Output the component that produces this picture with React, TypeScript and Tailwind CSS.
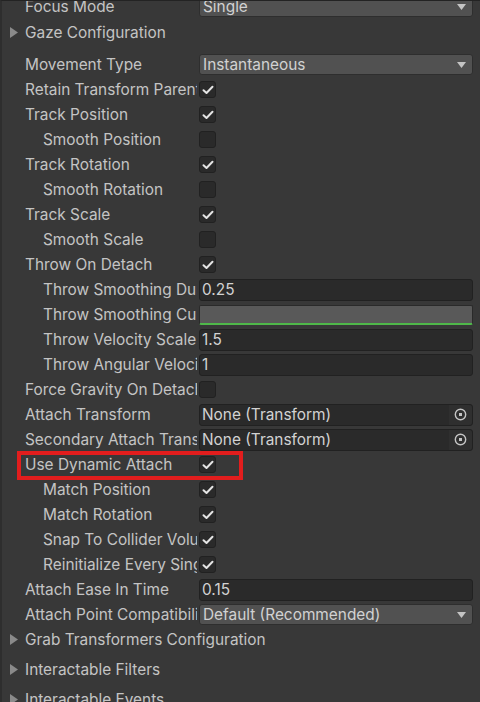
import React from "react";

type Field =
    | { kind: "dropdown"; value: string }
    | { kind: "check"; checked: boolean }
    | { kind: "text"; value: string }
    | { kind: "curve" }
    | { kind: "object"; value: string };

interface Row {
    label: string;
    indent?: boolean;
    field: Field;
    highlight?: boolean;
}

const rows: Row[] = [
    { label: "Movement Type", field: { kind: "dropdown", value: "Instantaneous" } },
    { label: "Retain Transform Parent", field: { kind: "check", checked: true } },
    { label: "Track Position", field: { kind: "check", checked: true } },
    { label: "Smooth Position", indent: true, field: { kind: "check", checked: false } },
    { label: "Track Rotation", field: { kind: "check", checked: true } },
    { label: "Smooth Rotation", indent: true, field: { kind: "check", checked: false } },
    { label: "Track Scale", field: { kind: "check", checked: true } },
    { label: "Smooth Scale", indent: true, field: { kind: "check", checked: false } },
    { label: "Throw On Detach", field: { kind: "check", checked: true } },
    { label: "Throw Smoothing Duration", indent: true, field: { kind: "text", value: "0.25" } },
    { label: "Throw Smoothing Curve", indent: true, field: { kind: "curve" } },
    { label: "Throw Velocity Scale", indent: true, field: { kind: "text", value: "1.5" } },
    { label: "Throw Angular Velocity Scale", indent: true, field: { kind: "text", value: "1" } },
    { label: "Force Gravity On Detach", field: { kind: "check", checked: false } },
    { label: "Attach Transform", field: { kind: "object", value: "None (Transform)" } },
    { label: "Secondary Attach Transform", field: { kind: "object", value: "None (Transform)" } },
    { label: "Use Dynamic Attach", field: { kind: "check", checked: true }, highlight: true },
    { label: "Match Position", indent: true, field: { kind: "check", checked: true } },
    { label: "Match Rotation", indent: true, field: { kind: "check", checked: true } },
    { label: "Snap To Collider Volume", indent: true, field: { kind: "check", checked: true } },
    { label: "Reinitialize Every Single Grab", indent: true, field: { kind: "check", checked: true } },
    { label: "Attach Ease In Time", field: { kind: "text", value: "0.15" } },
    { label: "Attach Point Compatibility Mode", field: { kind: "dropdown", value: "Default (Recommended)" } },
];

function Arrow() {
    return (
        <svg width="9" height="6" viewBox="0 0 9 6" className="shrink-0">
            <path d="M0 0 H9 L4.5 6 Z" fill="#c4c4c4" />
        </svg>
    );
}

function Checkbox({ checked }: { checked: boolean }) {
    return (
        <div className="w-[17px] h-[17px] rounded-[3px] bg-[#2a2a2a] border border-[#212121] flex items-center justify-center">
            {checked && (
                <svg width="12" height="10" viewBox="0 0 12 10">
                    <path d="M1.5 5.2 L4.5 8 L10.5 1.8" fill="none" stroke="#e4e4e4" strokeWidth="2" strokeLinecap="round" strokeLinejoin="round" />
                </svg>
            )}
        </div>
    );
}

function Value({ field }: { field: Field }) {
    switch (field.kind) {
        case "dropdown":
            return (
                <div className="h-[21px] w-full rounded-[3px] bg-[#515151] border border-[#2e2e2e] flex items-center justify-between pl-[3px] pr-[6px]">
                    <span className="text-[#d2d2d2]">{field.value}</span>
                    <Arrow />
                </div>
            );
        case "check":
            return <Checkbox checked={field.checked} />;
        case "text":
            return (
                <div className="h-[22px] w-full rounded-[3px] bg-[#2a2a2a] border border-[#212121] flex items-center pl-[2px]">
                    <span className="text-[#d2d2d2]">{field.value}</span>
                </div>
            );
        case "curve":
            return (
                <div className="h-[20px] w-full rounded-[2px] bg-[#595959] border border-[#2a2a2a] border-b-[2px] border-b-[#4fb84a]" />
            );
        case "object":
            return (
                <div className="h-[22px] w-full rounded-[3px] bg-[#2a2a2a] border border-[#212121] flex items-center">
                    <span className="flex-1 pl-[2px] text-[#d2d2d2]">{field.value}</span>
                    <div className="h-full w-[23px] rounded-r-[3px] bg-[#2f2f2f] flex items-center justify-center">
                        <svg width="13" height="13" viewBox="0 0 13 13">
                            <circle cx="6.5" cy="6.5" r="5.2" fill="none" stroke="#c4c4c4" strokeWidth="1.4" />
                            <rect x="5" y="5" width="3" height="3" fill="#c4c4c4" />
                        </svg>
                    </div>
                </div>
            );
    }
}

function PropRow({ row }: { row: Row }) {
    return (
        <div className="relative h-[25px] flex items-center">
            <div className={`w-[197px] shrink-0 overflow-hidden whitespace-nowrap ${row.indent ? "pl-[43px]" : "pl-[25px]"}`}>
                {row.label}
            </div>
            <div className="ml-[2px] w-[274px] flex items-center">
                <Value field={row.field} />
            </div>
            {row.highlight && (
                <div className="absolute left-[17px] top-[-1px] w-[226px] h-[29px] border-4 border-[#e21d1d] pointer-events-none" />
            )}
        </div>
    );
}

function Foldout({ label, className = "" }: { label: string; className?: string }) {
    return (
        <div className={`h-[25px] flex items-center ${className}`}>
            <div className="w-[25px] flex justify-center pl-[3px]">
                <svg width="8" height="11" viewBox="0 0 8 11">
                    <path d="M0 0 L8 5.5 L0 11 Z" fill="#8a8a8a" />
                </svg>
            </div>
            <span>{label}</span>
        </div>
    );
}

export default function App() {
    return (
        <div
            className="w-[480px] h-[702px] overflow-hidden bg-[#383838] border-l-2 border-l-[#2e2e2e] border-t border-t-[#232323] text-[#c4c4c4] text-[15.4px]"
            style={{ fontFamily: "Inter, 'Noto Sans', sans-serif" }}
        >
            <div className="-ml-[2px]">
                {/* header row cut off by the scroll view */}
                <div className="h-[25px] mt-[-7px]">
                    <PropRow row={{ label: "Focus Mode", field: { kind: "dropdown", value: "Single" } }} />
                </div>
                <Foldout label="Gaze Configuration" className="mt-[1px] mb-[7px]" />

                {rows.map((r) => (
                    <PropRow key={r.label} row={r} />
                ))}

                <Foldout label="Grab Transformers Configuration" className="mb-[5px]" />
                <Foldout label="Interactable Filters" className="mb-[5px]" />
                <Foldout label="Interactable Events" />
            </div>
        </div>
    );
}
